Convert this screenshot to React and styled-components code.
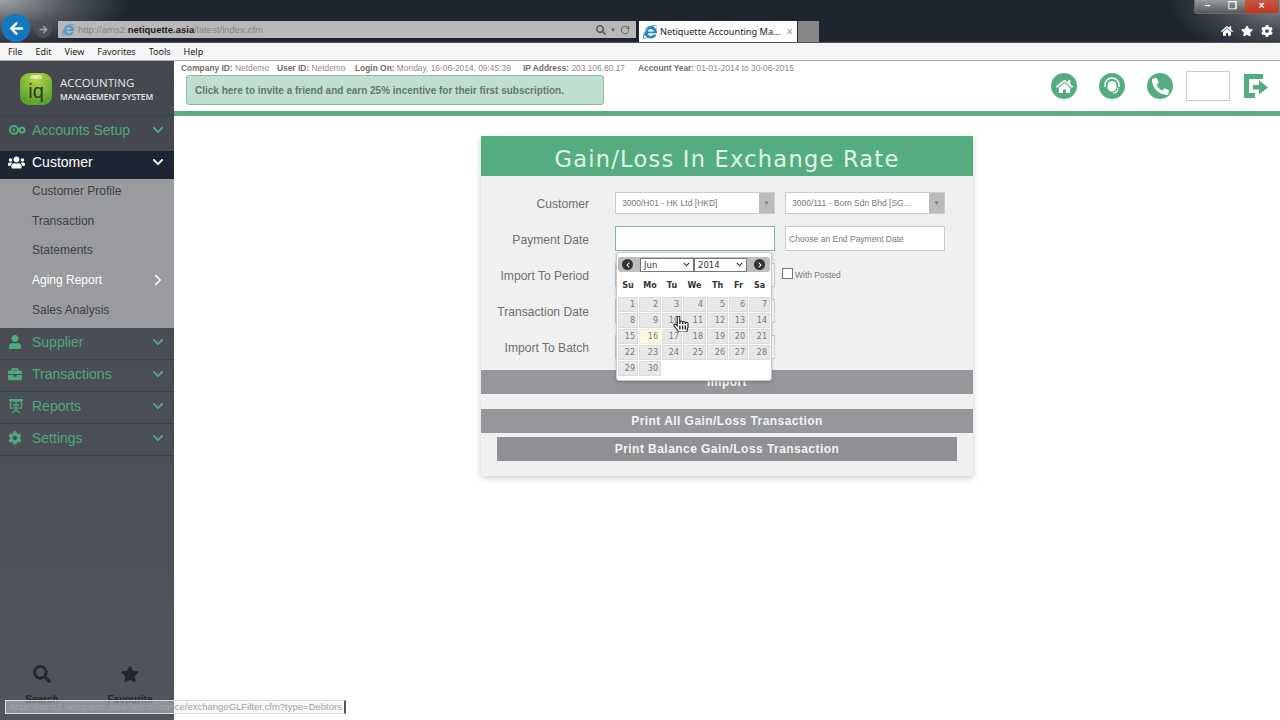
import React from 'react';
import styled, { createGlobalStyle } from 'styled-components';
import {
  FaArrowLeft,
  FaArrowRight,
  FaInternetExplorer,
  FaSearch,
  FaStar,
  FaHome,
  FaCog,
  FaUsers,
  FaUser,
  FaBriefcase,
  FaHandPointer,
  FaPhoneAlt,
  FaChevronDown,
  FaChevronRight,
  FaChevronLeft,
} from 'react-icons/fa';
import { LuRotateCw, LuChevronRight } from 'react-icons/lu';

const GREEN = '#55ad7f';

const GlobalStyle = createGlobalStyle`
  html, body {
    margin: 0;
    padding: 0;
    background: #fff;
    overflow: hidden;
  }
  * {
    box-sizing: border-box;
  }
`;

const Page = styled.div`
  width: 1280px;
  height: 720px;
  display: flex;
  flex-direction: column;
  position: relative;
  overflow: hidden;
  font-family: 'Liberation Sans', Arial, sans-serif;
`;

/* browser chrome */
const Chrome = styled.div`
  height: 43px;
  flex: none;
  display: flex;
  justify-content: space-between;
  padding-left: 2px;
  background:
    radial-gradient(ellipse 130px 50px at 0 0, #a2a4a6 0%, rgba(120, 124, 128, 0.6) 50%, rgba(30, 37, 48, 0) 100%),
    radial-gradient(ellipse 110px 60px at 100% 0, #8f9295 0%, rgba(100, 104, 108, 0.6) 50%, rgba(30, 37, 48, 0) 100%),
    #1e2530;
  border-bottom: 1px solid #555;
`;

const NavGroup = styled.div`
  display: flex;
  align-items: flex-end;
`;

const BackButton = styled.div`
  width: 28px;
  height: 28px;
  border-radius: 50%;
  background: #1378c0;
  color: #fff;
  font-size: 15px;
  display: flex;
  align-items: center;
  justify-content: center;
`;

const ForwardButton = styled.div`
  width: 18px;
  height: 18px;
  margin: 0 6px 4px 4px;
  border-radius: 50%;
  background: #4d5155;
  color: #a5a7a9;
  font-size: 9px;
  display: flex;
  align-items: center;
  justify-content: center;
`;

const AddressBar = styled.div`
  width: 578px;
  height: 17px;
  margin-bottom: 4px;
  background: #b8b8b8;
  display: flex;
  align-items: center;
  padding: 0 4px;
  font-size: 9.5px;
  color: #858585;
  white-space: nowrap;
  b {
    color: #1c1c1c;
  }
`;

const SiteIcon = styled.span`
  display: inline-flex;
  color: ${({ $dark }) => ($dark ? '#2a86c8' : '#4f9bd0')};
  font-size: ${({ $dark }) => ($dark ? '14px' : '12px')};
  margin-right: ${({ $dark }) => ($dark ? '3px' : '4px')};
`;

const AddressTools = styled.div`
  margin-left: auto;
  display: flex;
  align-items: center;
  gap: 4px;
  color: #5a5a5a;
  font-size: 10px;
  padding-right: 2px;
`;

const Caret = styled.span`
  font-size: 6px;
`;

const Tab = styled.div`
  width: 158px;
  height: 21px;
  margin-left: 3px;
  background: #fff;
  display: flex;
  align-items: center;
  padding: 0 4px;
  font-family: 'Noto Sans', sans-serif;
  font-size: 9.2px;
  color: #222;
  white-space: nowrap;
`;

const TabClose = styled.span`
  margin-left: auto;
  color: #999;
  font-size: 12px;
`;

const EmptyTab = styled.div`
  width: 21px;
  height: 21px;
  margin-left: 1px;
  background: #888;
`;

const RightGroup = styled.div`
  display: flex;
  flex-direction: column;
  align-items: flex-end;
  justify-content: space-between;
`;

const WindowControls = styled.div`
  display: flex;
  height: 14px;
  width: 85px;
  border: 1px solid #6a6d70;
  border-top: 0;
  border-radius: 0 0 3px 3px;
  overflow: hidden;
  margin-right: 1px;
`;

const WinButton = styled.div`
  flex: ${({ $close }) => ($close ? '1.3' : '1')};
  background: ${({ $close }) => ($close ? 'linear-gradient(#c05a48, #c8321c)' : 'linear-gradient(#9a9c9e, #55585c)')};
  color: #fff;
  font-size: 10px;
  font-weight: bold;
  line-height: 12px;
  text-align: center;
`;

const BrowserTools = styled.div`
  display: flex;
  gap: 8px;
  color: #fff;
  font-size: 12px;
  padding: 0 7px 5px 0;
`;

/* ie menu bar */
const MenuBar = styled.div`
  height: 18px;
  flex: none;
  display: flex;
  align-items: center;
  gap: 13px;
  padding-left: 8px;
  background: #f5f5f5;
  border-bottom: 1px solid #aaa;
  font-family: 'Noto Sans', sans-serif;
  font-size: 9px;
  color: #222;
`;

const Body = styled.div`
  flex: 1;
  display: flex;
  min-height: 0;
`;

/* sidebar */
const Sidebar = styled.aside`
  width: 174px;
  flex: none;
  display: flex;
  flex-direction: column;
  background: linear-gradient(#44474e, #50545c);
`;

const Brand = styled.div`
  height: 55px;
  flex: none;
  display: flex;
  align-items: center;
  padding: 1px 0 0 20px;
  gap: 8px;
  border-bottom: 1px solid #3d4046;
`;

const LogoBadge = styled.div`
  width: 32px;
  height: 32px;
  border-radius: 9px;
  background: radial-gradient(circle at 50% 20%, #b4d84a, #5fa32e 75%);
  display: flex;
  flex-direction: column;
  align-items: center;
  color: #2b3a22;
  font-family: 'Liberation Sans', sans-serif;
  line-height: 1;
`;

const LogoSmall = styled.span`
  font-size: 5px;
  font-weight: bold;
  color: #fff;
  margin-top: 2px;
`;

const LogoBig = styled.span`
  font-size: 20px;
  margin-top: 1px;
`;

const BrandText = styled.div`
  color: #e8e8e8;
  font-family: 'Open Sans', sans-serif;
  white-space: nowrap;
`;

const BrandTop = styled.div`
  font-size: 11.5px;
  line-height: 15px;
`;

const BrandBottom = styled.div`
  font-size: 8.4px;
  font-weight: 600;
  line-height: 13px;
`;

const NavList = styled.nav`
  display: flex;
  flex-direction: column;
`;

const NavItem = styled.div`
  height: ${({ $active }) => ($active ? '28px' : '32px')};
  margin-bottom: ${({ $gap }) => $gap || 0}px;
  display: flex;
  align-items: center;
  padding: ${({ $active }) => ($active ? '0 10px 6px 8px' : '0 10px 3px 8px')};
  font-size: 14px;
  color: ${({ $active }) => ($active ? '#fff' : '#4fa97a')};
  background: ${({ $active }) => ($active ? '#1d2733' : 'transparent')};
  border-bottom: ${({ $active }) => ($active ? '0' : '1px solid #3d4046')};
`;

const NavIcon = styled.span`
  width: 24px;
  flex: none;
  display: flex;
  font-size: ${({ $big }) => ($big ? '17px' : '14px')};
`;

const NavChevron = styled.span`
  margin-left: auto;
  display: flex;
  font-size: 12px;
`;

const SubMenu = styled.div`
  background: #9a9b9f;
  display: flex;
  flex-direction: column;
  padding-bottom: 1px;
`;

const SubItem = styled.div`
  height: 29.6px;
  display: flex;
  align-items: center;
  justify-content: space-between;
  padding: 0 7px 5px 32px;
  font-size: 12px;
  color: ${({ $on }) => ($on ? '#fff' : '#3e3f44')};
`;

const SideFooter = styled.div`
  margin-top: auto;
  height: 60px;
  display: flex;
  padding-left: 17px;
  gap: 38px;
`;

const FooterLink = styled.div`
  width: 50px;
  display: flex;
  flex-direction: column;
  align-items: center;
  gap: 11px;
  padding-top: 5px;
  font-size: 10px;
  font-weight: bold;
  color: #23282f;
  svg {
    font-size: 18px;
  }
`;

const Main = styled.main`
  flex: 1;
  display: flex;
  flex-direction: column;
  min-width: 0;
`;

const TopBar = styled.header`
  height: 55px;
  flex: none;
  display: flex;
  justify-content: space-between;
  border-bottom: 5px solid #5aad82;
  padding-left: 7px;
`;

const InfoColumn = styled.div`
  display: flex;
  flex-direction: column;
  padding-top: 2px;
`;

const InfoRow = styled.div`
  display: flex;
  font-size: 8.4px;
  line-height: 10px;
  color: #8c8c8c;
  white-space: nowrap;
  b {
    color: #6f6f6f;
  }
`;

const InfoItem = styled.span`
  width: ${({ $w }) => ($w ? `${$w}px` : 'auto')};
`;

const Banner = styled.div`
  width: 418px;
  height: 30px;
  margin: 2px 0 0 5px;
  padding-left: 8px;
  display: flex;
  align-items: center;
  background: #bfe0d0;
  border: 1px solid #8fbca6;
  border-radius: 3px;
  font-size: 10px;
  font-weight: bold;
  color: #66766f;
`;

const TopActions = styled.div`
  display: flex;
  align-items: flex-start;
  padding: 10px 12px 0 0;
`;

const RoundGroup = styled.div`
  display: flex;
  gap: 22px;
  margin-top: 2px;
`;

const RoundAction = styled.div`
  width: 26px;
  height: 26px;
  border-radius: 50%;
  background: ${GREEN};
  color: #fff;
  display: flex;
  align-items: center;
  justify-content: center;
  font-size: 17px;
`;

const SearchBox = styled.div`
  width: 44px;
  height: 30px;
  margin: 0 14px 0 13px;
  border: 1px solid #ccc;
  background: #fff;
`;

const LogoutLink = styled.div`
  display: flex;
  margin-top: 3px;
`;

const Content = styled.div`
  flex: 1;
  display: flex;
  justify-content: center;
  padding-top: 20px;
`;

/* form card */
const Card = styled.section`
  width: 492px;
  height: 340px;
  position: relative;
  background: #f0f0f0;
  box-shadow: 0 2px 6px rgba(0, 0, 0, 0.2);
`;

const CardTitle = styled.h1`
  height: 40px;
  margin: 0;
  background: ${GREEN};
  color: #dff5e9;
  font-family: 'DejaVu Sans', Verdana, sans-serif;
  font-size: 22.5px;
  font-weight: normal;
  line-height: 46px;
  letter-spacing: 1.25px;
  text-align: center;
`;

const Form = styled.div`
  display: flex;
  flex-direction: column;
  gap: 12px;
  padding: 16px 0 11px;
`;

const FormRow = styled.div`
  height: ${({ $h }) => $h}px;
  display: grid;
  grid-template-columns: 134px 160px 170px;
  align-items: center;
  & > :nth-child(3) {
    margin-left: 10px;
  }
`;

const Label = styled.label`
  padding: 2px 26px 0 0;
  text-align: right;
  font-size: 12.1px;
  color: #6f6f6f;
`;

const Field = styled.div`
  height: 100%;
  background: #fff;
  border: 1px solid ${({ $focus }) => ($focus ? '#7fb89b' : '#ccc')};
  display: flex;
  align-items: center;
  padding-left: ${({ $pad }) => $pad || 3}px;
  font-size: 8.5px;
  color: #777;
  white-space: nowrap;
  overflow: hidden;
`;

const SelectArrow = styled.span`
  margin-left: auto;
  align-self: stretch;
  width: 15px;
  flex: none;
  background: #bbb;
  color: #777;
  font-size: 6px;
  display: flex;
  align-items: center;
  justify-content: center;
`;

const CheckLabel = styled.label`
  display: flex;
  align-items: center;
  gap: 2px;
  font-size: 8.5px;
  color: #777;
  && {
    margin-left: 7px;
  }
`;

const CheckBox = styled.span`
  width: 11px;
  height: 11px;
  margin-top: -4px;
  background: #fff;
  border: 1px solid #777;
`;

const ActionBar = styled.div`
  height: 24px;
  margin: ${({ $inset }) => ($inset ? '4px 16px 0' : '0')};
  background: ${({ $inset }) => ($inset ? '#8f9094' : '#96979b')};
  color: #f4f4f4;
  font-size: 12px;
  font-weight: bold;
  line-height: 25px;
  text-align: center;
  letter-spacing: 0.45px;
`;

const ActionGap = styled.div`
  height: 15px;
`;

/* date picker popup */
const Calendar = styled.div`
  position: absolute;
  left: 135px;
  top: 116px;
  width: 156px;
  height: 129px;
  padding: 4px 1px 0;
  background: #fff;
  border: 1px solid #ccc;
  border-radius: 3px;
  box-shadow: 0 1px 3px rgba(0, 0, 0, 0.25);
  font-family: 'DejaVu Sans', Verdana, sans-serif;
`;

const CalHeader = styled.div`
  height: 15px;
  display: flex;
  align-items: center;
  justify-content: space-between;
  padding: 0 5px 0 4px;
  background: #bdbdbd;
  border-radius: 3px;
`;

const CalNav = styled.span`
  width: 11px;
  height: 11px;
  border-radius: 50%;
  background: #333;
  color: #fff;
  font-size: 6px;
  display: flex;
  align-items: center;
  justify-content: center;
`;

const CalSelects = styled.div`
  display: flex;
`;

const CalSelect = styled.div`
  width: ${({ $w }) => $w}px;
  height: 14px;
  background: #fff;
  border: 1px solid #777;
  display: flex;
  align-items: center;
  justify-content: space-between;
  padding: 0 3px;
  font-size: 8.5px;
  color: #333;
  svg {
    font-size: 7px;
  }
`;

const CalGrid = styled.div`
  display: grid;
  grid-template-columns: 20px 22px 20px 23px 21px 19px 21px;
  grid-template-rows: 22px;
  grid-auto-rows: 15px;
  column-gap: 1px;
  row-gap: 1px;
  margin-top: 2px;
`;

const DayName = styled.div`
  font-size: 8px;
  font-weight: bold;
  color: #333;
  text-align: center;
  line-height: 24px;
`;

const DayCell = styled.div`
  background: ${({ $today }) => ($today ? '#fdf8e4' : '#e8e8e8')};
  border: 1px solid ${({ $today }) => ($today ? '#f5efd6' : '#dcdcdc')};
  font-size: 8px;
  color: #777;
  line-height: 13px;
  text-align: right;
  padding-right: 2px;
`;

const HandCursor = styled.span`
  position: absolute;
  left: 192px;
  top: 180px;
  display: flex;
  color: #fff;
  font-size: 16px;
  svg path {
    stroke: #222;
    stroke-width: 36px;
  }
`;

const StatusTip = styled.div`
  position: absolute;
  left: 5px;
  bottom: 6px;
  width: 341px;
  height: 14px;
  padding-left: 4px;
  background: rgba(235, 235, 235, 0.4);
  border: 1px solid #ddd;
  border-right: 2px solid #555;
  font-size: 9.5px;
  line-height: 12px;
  color: #a2a4a7;
  white-space: nowrap;
  overflow: hidden;
`;

const RingsIcon = () => (
  <svg width="18" height="12" viewBox="0 0 18 12" fill="none" stroke="currentColor" strokeWidth="2">
    <circle cx="6" cy="6" r="4" />
    <circle cx="6" cy="6" r="1" fill="currentColor" strokeWidth="1" />
    <circle cx="14" cy="6" r="2.5" />
  </svg>
);

const BoardIcon = () => (
  <svg width="16" height="16" viewBox="0 0 16 16" fill="none" stroke="currentColor" strokeWidth="1.3">
    <path d="M1 2h14" strokeWidth="2" />
    <rect x="2.5" y="3" width="11" height="7" />
    <path d="M8 3v9M5 7h6M4 15l4-3 4 3" />
  </svg>
);

const HeadsetIcon = () => (
  <svg width="20" height="20" viewBox="0 0 20 20" fill="none" stroke="#fff">
    <path d="M3 11V9a7 7 0 0 1 14 0v2" strokeWidth="1.6" />
    <rect x="5.5" y="5" width="9" height="10.5" rx="4.5" fill="#fff" stroke="none" />
    <path d="M16 12c0 3-2 5-5 5" strokeWidth="1.2" />
  </svg>
);

const LogoutIcon = () => (
  <svg width="24" height="24" viewBox="0 0 24 24" fill={GREEN}>
    <path d="M0 0h19v5H5v14h6v5H0z" />
    <path d="M9 11h6V6l9 7.5-9 7v-5H9z" />
  </svg>
);

const MENU = ['File', 'Edit', 'View', 'Favorites', 'Tools', 'Help'];
const DAYS = ['Su', 'Mo', 'Tu', 'We', 'Th', 'Fr', 'Sa'];
const DATES = Array.from({ length: 30 }, (_, i) => i + 1);
const SUB_ITEMS = ['Customer Profile', 'Transaction', 'Statements', 'Aging Report', 'Sales Analysis'];

const App = () => {
  return (
    <Page>
      <GlobalStyle />
      <Chrome>
        <NavGroup>
          <BackButton>
            <FaArrowLeft />
          </BackButton>
          <ForwardButton>
            <FaArrowRight />
          </ForwardButton>
          <AddressBar>
            <SiteIcon>
              <FaInternetExplorer />
            </SiteIcon>
            http://ams2.<b>netiquette.asia</b>/latest/index.cfm
            <AddressTools>
              <FaSearch />
              <Caret>▼</Caret>
              <LuRotateCw />
            </AddressTools>
          </AddressBar>
          <Tab>
            <SiteIcon $dark>
              <FaInternetExplorer />
            </SiteIcon>
            Netiquette Accounting Ma...
            <TabClose>×</TabClose>
          </Tab>
          <EmptyTab />
        </NavGroup>
        <RightGroup>
          <WindowControls>
            <WinButton>–</WinButton>
            <WinButton>❐</WinButton>
            <WinButton $close>×</WinButton>
          </WindowControls>
          <BrowserTools>
            <FaHome />
            <FaStar />
            <FaCog />
          </BrowserTools>
        </RightGroup>
      </Chrome>
      <MenuBar>
        {MENU.map((item) => (
          <span key={item}>{item}</span>
        ))}
      </MenuBar>
      <Body>
        <Sidebar>
          <Brand>
            <LogoBadge>
              <LogoSmall>AMS</LogoSmall>
              <LogoBig>iq</LogoBig>
            </LogoBadge>
            <BrandText>
              <BrandTop>ACCOUNTING</BrandTop>
              <BrandBottom>MANAGEMENT SYSTEM</BrandBottom>
            </BrandText>
          </Brand>
          <NavList>
            <NavItem $gap={3}>
              <NavIcon>
                <RingsIcon />
              </NavIcon>
              Accounts Setup
              <NavChevron>
                <FaChevronDown />
              </NavChevron>
            </NavItem>
            <NavItem $active>
              <NavIcon $big>
                <FaUsers />
              </NavIcon>
              Customer
              <NavChevron>
                <FaChevronDown />
              </NavChevron>
            </NavItem>
            <SubMenu>
              {SUB_ITEMS.map((item) => (
                <SubItem key={item} $on={item === 'Aging Report'}>
                  {item}
                  {item === 'Aging Report' && <LuChevronRight size={18} />}
                </SubItem>
              ))}
            </SubMenu>
            {[
              ['Supplier', <FaUser key="i" />],
              ['Transactions', <FaBriefcase key="i" />],
              ['Reports', <BoardIcon key="i" />],
              ['Settings', <FaCog key="i" />],
            ].map(([label, icon]) => (
              <NavItem key={label}>
                <NavIcon>{icon}</NavIcon>
                {label}
                <NavChevron>
                  <FaChevronDown />
                </NavChevron>
              </NavItem>
            ))}
          </NavList>
          <SideFooter>
            <FooterLink>
              <FaSearch />
              Search
            </FooterLink>
            <FooterLink>
              <FaStar />
              Favourite
            </FooterLink>
          </SideFooter>
        </Sidebar>
        <Main>
          <TopBar>
            <InfoColumn>
              <InfoRow>
                <InfoItem $w={96}>
                  <b>Company ID:</b> Netdemo
                </InfoItem>
                <InfoItem $w={78}>
                  <b>User ID:</b> Netdemo
                </InfoItem>
                <InfoItem $w={168}>
                  <b>Login On:</b> Monday, 16-06-2014, 09:45:39
                </InfoItem>
                <InfoItem $w={115}>
                  <b>IP Address:</b> 203.106.80.17
                </InfoItem>
                <InfoItem>
                  <b>Account Year:</b> 01-01-2014 to 30-06-2015
                </InfoItem>
              </InfoRow>
              <Banner>Click here to invite a friend and earn 25% incentive for their first subscription.</Banner>
            </InfoColumn>
            <TopActions>
              <RoundGroup>
                <RoundAction>
                  <FaHome />
                </RoundAction>
                <RoundAction>
                  <HeadsetIcon />
                </RoundAction>
                <RoundAction>
                  <FaPhoneAlt />
                </RoundAction>
              </RoundGroup>
              <SearchBox />
              <LogoutLink>
                <LogoutIcon />
              </LogoutLink>
            </TopActions>
          </TopBar>
          <Content>
            <Card>
              <CardTitle>Gain/Loss In Exchange Rate</CardTitle>
              <Form>
                <FormRow $h={22}>
                  <Label>Customer</Label>
                  <Field $pad={6}>
                    3000/H01 - HK Ltd [HKD]
                    <SelectArrow>▼</SelectArrow>
                  </Field>
                  <Field $pad={6}>
                    3000/111 - Born Sdn Bhd [SG...
                    <SelectArrow>▼</SelectArrow>
                  </Field>
                </FormRow>
                <FormRow $h={25}>
                  <Label>Payment Date</Label>
                  <Field $focus />
                  <Field>Choose an End Payment Date</Field>
                </FormRow>
                <FormRow $h={24}>
                  <Label>Import To Period</Label>
                  <Field />
                  <CheckLabel>
                    <CheckBox />
                    With Posted
                  </CheckLabel>
                </FormRow>
                <FormRow $h={24}>
                  <Label>Transaction Date</Label>
                  <Field />
                </FormRow>
                <FormRow $h={24}>
                  <Label>Import To Batch</Label>
                  <Field />
                </FormRow>
              </Form>
              <ActionBar>Import</ActionBar>
              <ActionGap />
              <ActionBar>Print All Gain/Loss Transaction</ActionBar>
              <ActionBar $inset>Print Balance Gain/Loss Transaction</ActionBar>
              <Calendar>
                <CalHeader>
                  <CalNav>
                    <FaChevronLeft />
                  </CalNav>
                  <CalSelects>
                    <CalSelect $w={54}>
                      Jun
                      <FaChevronDown />
                    </CalSelect>
                    <CalSelect $w={53}>
                      2014
                      <FaChevronDown />
                    </CalSelect>
                  </CalSelects>
                  <CalNav>
                    <FaChevronRight />
                  </CalNav>
                </CalHeader>
                <CalGrid>
                  {DAYS.map((day) => (
                    <DayName key={day}>{day}</DayName>
                  ))}
                  {DATES.map((date) => (
                    <DayCell key={date} $today={date === 16}>
                      {date}
                    </DayCell>
                  ))}
                </CalGrid>
              </Calendar>
              <HandCursor>
                <FaHandPointer />
              </HandCursor>
            </Card>
          </Content>
        </Main>
      </Body>
      <StatusTip>https://ams2.netiquette.asia/latest/finance/exchangeGLFilter.cfm?type=Debtors</StatusTip>
    </Page>
  );
};

export default App;
